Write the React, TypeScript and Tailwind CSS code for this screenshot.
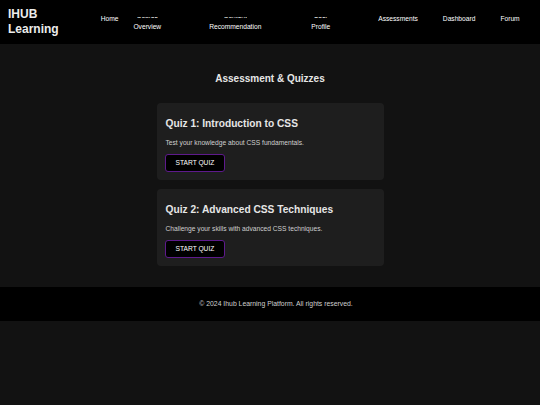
const font = { fontFamily: '"Liberation Sans", Arial, sans-serif' };

const navItems: { top?: string; label: string; ml: string }[] = [
  { label: "Home", ml: "ml-[42px]" },
  { top: "Course", label: "Overview", ml: "ml-[15px]" },
  { top: "Content", label: "Recommendation", ml: "ml-[48px]" },
  { top: "User", label: "Profile", ml: "ml-[50px]" },
  { label: "Assessments", ml: "ml-[48px]" },
  { label: "Dashboard", ml: "ml-[25px]" },
  { label: "Forum", ml: "ml-[25px]" },
];

const quizzes = [
  {
    title: "Quiz 1: Introduction to CSS",
    text: "Test your knowledge about CSS fundamentals.",
  },
  {
    title: "Quiz 2: Advanced CSS Techniques",
    text: "Challenge your skills with advanced CSS techniques.",
  },
];

function NavLink({ top, label }: { top?: string; label: string }) {
  if (!top) {
    return <span className="block leading-[8px]">{label}</span>;
  }
  // first line is mostly hidden under the header edge, only its foot shows
  return (
    <div className="mt-[2px] flex flex-col items-center">
      <div className="h-[1.5px] overflow-hidden">
        <div className="-mt-[5.5px] leading-[8px] whitespace-nowrap">{top}</div>
      </div>
      <span className="mt-[4px] block leading-[8px] whitespace-nowrap">{label}</span>
    </div>
  );
}

function QuizCard({ title, text }: { title: string; text: string }) {
  return (
    <div className="rounded-[4px] bg-[#1e1e1e] px-[9px] pt-[15px] pb-[8px]">
      <h3 className="text-[10.2px] leading-[12px] font-bold text-[#e6e6e6]">{title}</h3>
      <p className="mt-[9px] text-[6.67px] leading-[8px] text-[#cfcfcf]">{text}</p>
      <button className="mt-[7px] -ml-[1px] h-[18px] rounded-[3px] border-[1.5px] border-[#5e1a8c] bg-black px-[10px] text-[6.67px] leading-[8px] text-white">
        START QUIZ
      </button>
    </div>
  );
}

export default function App() {
  return (
    <div className="min-h-[405px] bg-[#121212]" style={font}>
      <header className="flex h-[44px] items-start bg-black px-[8px]">
        <div className="mt-[7px] text-[12px] leading-[15px] font-bold text-[#ececec]">
          IHUB
          <br />
          Learning
        </div>
        <nav className="mt-[15px] flex items-start text-[6.67px] text-white">
          {navItems.map((item) => (
            <div key={item.label} className={`${item.ml} text-center`}>
              <NavLink top={item.top} label={item.label} />
            </div>
          ))}
        </nav>
      </header>

      <main className="flex flex-col items-center pt-[29px] pb-[21px]">
        <h2 className="text-[10px] leading-[12px] font-bold text-[#e6e6e6]">
          Assessment &amp; Quizzes
        </h2>
        <div className="mt-[18px] flex w-[227px] flex-col gap-[9px]">
          {quizzes.map((q) => (
            <QuizCard key={q.title} {...q} />
          ))}
        </div>
      </main>

      <footer className="flex h-[34px] items-center justify-center bg-black pl-[12px] text-[6.85px] text-[#d0d0d0]">
        © 2024 Ihub Learning Platform. All rights reserved.
      </footer>
    </div>
  );
}
